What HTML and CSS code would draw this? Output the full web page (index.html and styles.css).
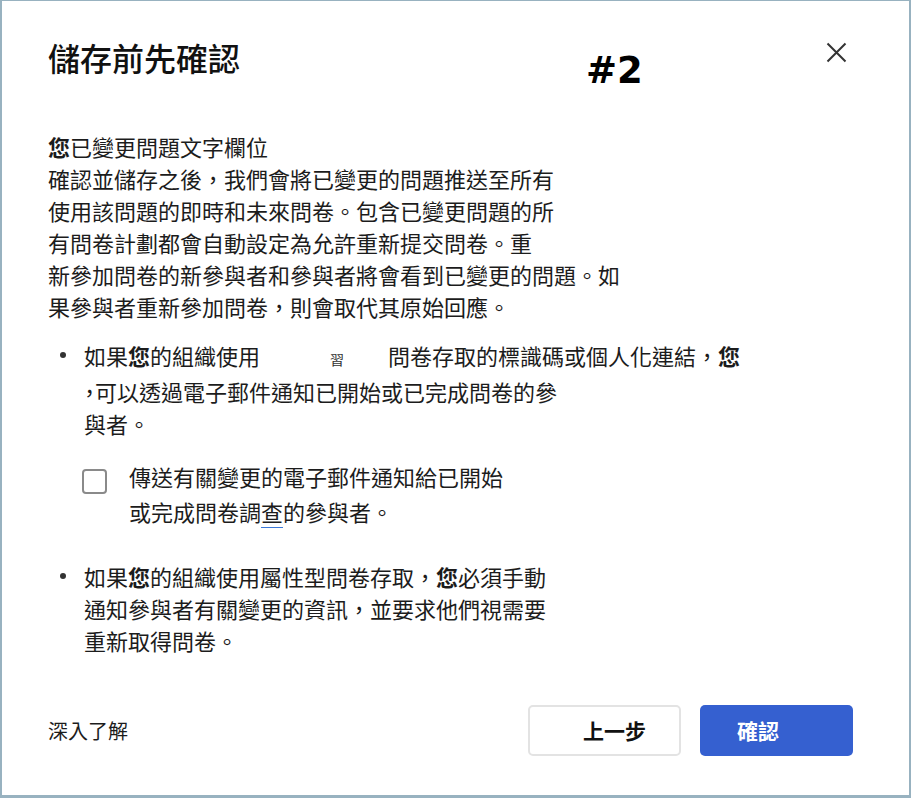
FILE: index.html
```html
<!DOCTYPE html>
<html lang="zh-Hant">
<head>
  <meta charset="UTF-8" />
  <title>儲存前先確認</title>
  <link rel="stylesheet" href="styles.css">
</head>
<body>
  <div class="frame">
    <div class="dialog">
      <header class="head">
        <h1 class="title">儲存前先確認</h1>
        <button class="close" aria-label="關閉">
          <svg width="21" height="21" viewBox="0 0 21 21">
            <path d="M1.5 1.5 L19.5 19.5 M19.5 1.5 L1.5 19.5" stroke="#333" stroke-width="2" fill="none" />
          </svg>
        </button>
      </header>
      <span class="tag">#2</span>

      <p class="lead"><b>您</b>已變更問題文字欄位<br>確認並儲存之後，我們會將已變更的問題推送至所有<br>使用該問題的即時和未來問卷。包含已變更問題的所<br>有問卷計劃都會自動設定為允許重新提交問卷。重<br>新參加問卷的新參與者和參與者將會看到已變更的問題。如<br>果參與者重新參加問卷，則會取代其原始回應。</p>

      <ul class="notes">
        <li>
          <div>
            <div>如果<b>您</b>的組織使用<span class="ghost">習</span>問卷存取的標識碼或個人化連結，<b>您</b><br><span class="half">，</span>可以透過電子郵件通知已開始或已完成問卷的參<br>與者。</div>
            <label class="check">
              <span class="box"></span>
              <span class="check-text">傳送有關變更的電子郵件通知給已開始<br>或完成問卷調<span class="mark">查</span>的參與者。</span>
            </label>
          </div>
        </li>
        <li>
          <div>如果<b>您</b>的組織使用屬性型問卷存取，<b>您</b>必須手動<br>通知參與者有關變更的資訊，並要求他們視需要<br>重新取得問卷。</div>
        </li>
      </ul>

      <footer class="foot">
        <a class="more">深入了解</a>
        <div class="actions">
          <button class="btn btn-back">上一步</button>
          <button class="btn btn-ok">確認</button>
        </div>
      </footer>
    </div>
  </div>
</body>
</html>
```
FILE: styles.css
```css
body {
  margin: 0;
  font-family: "Noto Sans CJK SC", "Noto Sans CJK TC", sans-serif;
  color: #1c1c1c;
}

.frame {
  width: 911px;
  height: 798px;
  box-sizing: border-box;
  border: solid #98b2c0;
  border-width: 1px 2px 3px 2px;
  background: #fff;
}

.dialog {
  position: relative;
  display: flex;
  flex-direction: column;
  height: 100%;
  box-sizing: border-box;
  padding: 36px 56px 0 46px;
}

.head {
  display: flex;
  justify-content: space-between;
  align-items: flex-start;
}

.title {
  margin: 0;
  font-size: 32px;
  line-height: 40px;
  font-weight: 500;
  color: #111;
}

.close {
  margin: 5px 6px 0 0;
  padding: 0;
  width: 21px;
  height: 21px;
  border: none;
  background: none;
  cursor: pointer;
}

.close svg {
  display: block;
}

/* annotation label over the dialog */
.tag {
  position: absolute;
  left: 584px;
  top: 51px;
  font: 700 37px/1 "DejaVu Sans", sans-serif;
  color: #000;
}

.lead {
  margin: 53px 0 0;
  font-size: 22px;
  line-height: 32px;
}

b {
  font-weight: 700;
}

.notes {
  list-style: none;
  margin: 17px 0 0;
  padding: 0;
  font-size: 22px;
  line-height: 32px;
}

.notes li {
  display: flex;
}

.notes li::before {
  content: "";
  flex: none;
  width: 6px;
  height: 6px;
  border-radius: 50%;
  background: #333;
  margin: 13px 18px 0 12px;
}

.notes li + li {
  margin-top: 31px;
}

.ghost {
  display: inline-block;
  margin: 0 44px 0 70px;
  font-size: 14px;
  color: #333;
}

.half {
  font-feature-settings: "halt";
}

.check {
  display: flex;
  gap: 22px;
  margin: 20px 0 0 -2px;
  line-height: 35px;
}

.box {
  flex: none;
  width: 25px;
  height: 25px;
  box-sizing: border-box;
  border: 2px solid #8a8a8a;
  border-radius: 4px;
  margin-top: 10px;
}

.mark {
  border-bottom: 1px solid #3b78d8;
}

.foot {
  display: flex;
  justify-content: space-between;
  align-items: center;
  margin-top: 49px;
}

.more {
  font-size: 20px;
  color: #1c1c1c;
}

.actions {
  display: flex;
  gap: 19px;
}

.btn {
  width: 153px;
  height: 51px;
  box-sizing: border-box;
  border-radius: 5px;
  font: 700 21px/1 "Noto Sans CJK SC", "Noto Sans CJK TC", sans-serif;
  text-align: left;
  cursor: pointer;
}

.btn-back {
  background: #fff;
  color: #111;
  border: 2px solid #e3e3e3;
  padding-left: 53px;
}

.btn-ok {
  background: #3560d0;
  color: #fff;
  border: none;
  padding-left: 37px;
}
```
